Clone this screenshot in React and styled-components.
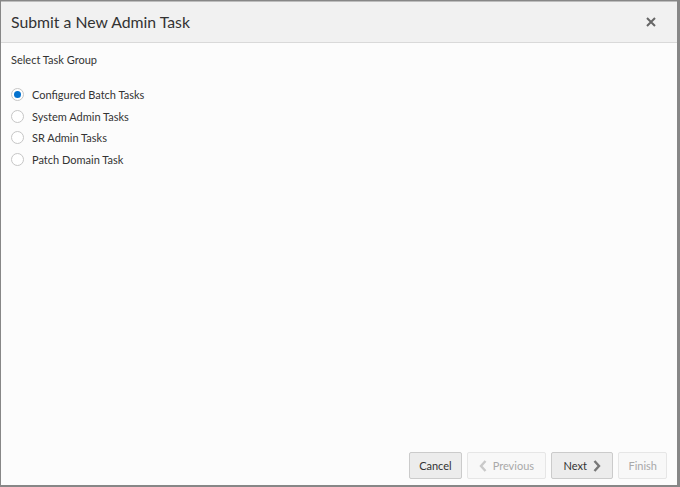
import React, { useState } from "react";
import styled, { createGlobalStyle } from "styled-components";

const Global = createGlobalStyle`
  html, body { margin: 0; padding: 0; }
  body { font-family: Lato, "Noto Sans", sans-serif; background: #868686; }
`;

const Backdrop = styled.div`
  width: 680px;
  height: 487px;
  box-sizing: border-box;
  padding: 1px 3px 2px 1px;
  background: #878787;
  display: flex;
`;

const Dialog = styled.div`
  flex: 1;
  display: flex;
  flex-direction: column;
  background: #fcfcfc;
  border-top: 1px solid #bdbdbd;
`;

const Header = styled.div`
  height: 40px;
  flex: none;
  display: flex;
  align-items: center;
  justify-content: space-between;
  padding: 0 20px 0 10px;
  background: #f1f1f1;
  border-bottom: 1px solid #d9d9d9;
`;

const Title = styled.h1`
  margin: 0;
  font-size: 15.8px;
  font-weight: 400;
  color: #333;
  margin-top: -2px;
`;

const Close = styled.button`
  border: 0;
  background: none;
  padding: 0;
  width: 12px;
  height: 12px;
  display: flex;
  align-items: center;
  justify-content: center;
  cursor: pointer;
`;

const Body = styled.div`
  flex: 1;
  padding: 10px 10px 0 10px;
  display: flex;
  flex-direction: column;
`;

const GroupLabel = styled.div`
  font-size: 11px;
  color: #333;
  margin-bottom: 20px;
`;

const RadioList = styled.div`
  display: flex;
  flex-direction: column;
  gap: 5px;
`;

const RadioRow = styled.label`
  display: flex;
  align-items: center;
  gap: 8px;
  height: 16.7px;
  font-size: 11px;
  color: #333;
  cursor: pointer;
`;

const Circle = styled.span`
  width: 13px;
  height: 13px;
  box-sizing: border-box;
  border-radius: 50%;
  border: 1px solid #c6c6c6;
  background: #fff;
  display: flex;
  align-items: center;
  justify-content: center;
  &::after {
    content: "";
    width: 7px;
    height: 7px;
    border-radius: 50%;
    background: ${(p) => (p.$on ? "#0572ce" : "transparent")};
  }
`;

const Footer = styled.div`
  display: flex;
  justify-content: flex-end;
  gap: 5px;
  padding: 0 10px 6px 0;
`;

const Button = styled.button`
  height: 27px;
  box-sizing: border-box;
  padding: 0 ${(p) => p.$px || 10}px;
  border-radius: 2px;
  border: 1px solid ${(p) => (p.disabled ? "#e6e6e6" : "#cbcbcb")};
  background: ${(p) => (p.disabled ? "#f8f8f8" : "#ececec")};
  color: ${(p) => (p.disabled ? "#a9a9a9" : "#333")};
  font-family: Lato, "Noto Sans", sans-serif;
  font-size: 11px;
  display: flex;
  align-items: center;
  gap: 6px;
`;

const Chevron = ({ dir, color }) => (
  <svg width="8" height="12" viewBox="0 0 8 12">
    <path
      d={dir === "left" ? "M6.5 1 L2 6 L6.5 11" : "M1.5 1 L6 6 L1.5 11"}
      fill="none"
      stroke={color}
      strokeWidth="2.4"
    />
  </svg>
);

const options = [
  "Configured Batch Tasks",
  "System Admin Tasks",
  "SR Admin Tasks",
  "Patch Domain Task",
];

export default function App() {
  const [sel, setSel] = useState(0);
  return (
    <>
      <Global />
      <Backdrop>
        <Dialog>
          <Header>
            <Title>Submit a New Admin Task</Title>
            <Close aria-label="Close">
              <svg width="10" height="10" viewBox="0 0 10 10">
                <path d="M1 1 L9 9 M9 1 L1 9" stroke="#666" strokeWidth="2" />
              </svg>
            </Close>
          </Header>
          <Body>
            <GroupLabel>Select Task Group</GroupLabel>
            <RadioList>
              {options.map((o, i) => (
                <RadioRow key={o} onClick={() => setSel(i)}>
                  <Circle $on={sel === i} />
                  {o}
                </RadioRow>
              ))}
            </RadioList>
          </Body>
          <Footer>
            <Button $px={9}>Cancel</Button>
            <Button disabled $px={11}>
              <Chevron dir="left" color="#c9c9c9" />
              Previous
            </Button>
            <Button $px={11.5}>
              Next
              <Chevron dir="right" color="#777" />
            </Button>
            <Button disabled $px={9}>Finish</Button>
          </Footer>
        </Dialog>
      </Backdrop>
    </>
  );
}
